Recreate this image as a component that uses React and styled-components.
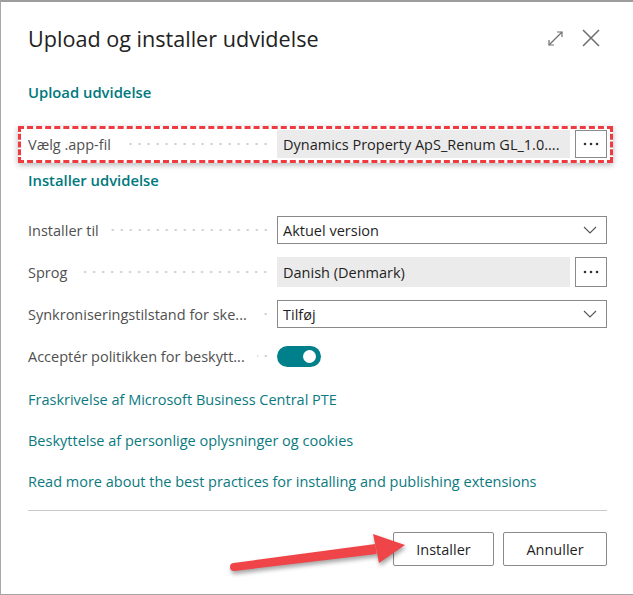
import React from 'react';
import styled, { createGlobalStyle } from 'styled-components';

const GlobalStyle = createGlobalStyle`
  html, body { margin: 0; padding: 0; background: #fff; }
  body { font-family: "Open Sans", "Noto Sans", Arial, sans-serif; }
`;

const teal = '#00787d';
const fieldBorder = '#8a8a8a';

const Dialog = styled.div`
  position: relative;
  width: 633px;
  height: 595px;
  box-sizing: border-box;
  background: #fff;
  border-top: 2px solid #9d9d9d;
  border-left: 1px solid #a8a8a8;
  border-bottom: 1px solid #a4a4a4;
  padding: 0 26px 0 27px;
  color: #212121;
  font-size: 14.5px;
`;

const Header = styled.div`
  display: flex;
  align-items: center;
  justify-content: space-between;
  height: 36px;
  margin-top: 18px;
`;

const Title = styled.h1`
  margin: 0;
  font-size: 21.6px;
  font-weight: 400;
  color: #222;
`;

const HeaderIcons = styled.div`
  display: flex;
  align-items: center;
  gap: 18px;
  margin-right: 7px;
  color: #707070;
`;

const SectionTitle = styled.h2`
  margin: ${p => p.$top}px 0 0;
  line-height: 20px;
  font-size: 14.8px;
  font-weight: 600;
  color: ${teal};
`;

const Highlight = styled.div`
  margin: 24px -6px 0 -10px;
  padding: 1px 3px 2px 7px;
  border: 3px dashed #ef3b40;
  box-shadow: 0 2px 6px rgba(0, 0, 0, 0.28);
`;

const Fields = styled.div`
  display: flex;
  flex-direction: column;
  gap: 12px;
  margin-top: 25px;
`;

const Row = styled.div`
  display: grid;
  grid-template-columns: 249px 1fr;
  align-items: center;
  height: ${p => p.$h || 30}px;
`;

const Label = styled.div`
  display: flex;
  align-items: center;
  padding-right: 7px;
  color: #505050;
  white-space: nowrap;
`;

const Leader = styled.span`
  flex: 1;
  height: 4px;
  margin-left: 12px;
  background-image: radial-gradient(circle, #c8c8c8 0.9px, transparent 1.3px);
  background-size: 9px 4px;
  background-repeat: repeat-x;
  background-position: right center;
`;

const Control = styled.div`
  display: flex;
  align-items: stretch;
  gap: 5px;
  height: 100%;
`;

const Select = styled.div`
  flex: 1;
  display: flex;
  align-items: center;
  justify-content: space-between;
  box-sizing: border-box;
  height: 28px;
  align-self: center;
  padding: 0 9px 0 5px;
  border: 1px solid ${fieldBorder};
  color: #1f1f1f;
`;

const ReadOnly = styled.div`
  flex: 1;
  display: flex;
  align-items: center;
  padding-left: 6px;
  background: #ebebeb;
  color: #1f1f1f;
  white-space: nowrap;
  overflow: hidden;
`;

const DotsButton = styled.button`
  width: 32px;
  box-sizing: border-box;
  padding: 0;
  display: flex;
  align-items: center;
  justify-content: center;
  background: #fff;
  border: 1px solid ${fieldBorder};
  color: #333;
`;

const Toggle = styled.div`
  position: relative;
  align-self: center;
  width: 44px;
  height: 21px;
  border-radius: 11px;
  background: #00808a;
  &::after {
    content: '';
    position: absolute;
    top: 4px;
    right: 5px;
    width: 13px;
    height: 13px;
    border-radius: 50%;
    background: #fff;
  }
`;

const Links = styled.div`
  display: flex;
  flex-direction: column;
  gap: 21px;
  margin-top: 19px;
`;

const Link = styled.a`
  line-height: 20px;
  color: #0b7a80;
  text-decoration: none;
`;

const Divider = styled.hr`
  margin: 18px 0 0;
  border: none;
  border-top: 1px solid #c8c8c8;
`;

const Footer = styled.div`
  display: flex;
  justify-content: flex-end;
  gap: 9px;
  margin-top: 21px;
`;

const Button = styled.button`
  width: ${p => p.$w}px;
  height: 34px;
  background: #fff;
  border: 1px solid ${fieldBorder};
  border-radius: 2px;
  font-family: inherit;
  font-size: 14.5px;
  color: #1f1f1f;
`;

const ArrowSvg = styled.svg`
  position: absolute;
  left: 220px;
  top: 520px;
  overflow: visible;
  filter: drop-shadow(1px 3px 2px rgba(0, 0, 0, 0.35));
`;

const ExpandIcon = () => (
  <svg width="17" height="17" viewBox="0 0 17 17" fill="none" stroke="currentColor" strokeWidth="1.2">
    <path d="M2 15 L15 2" />
    <path d="M10 2 H15 V7" />
    <path d="M2 10 V15 H7" />
  </svg>
);

const CloseIcon = () => (
  <svg width="18" height="18" viewBox="0 0 18 18" fill="none" stroke="currentColor" strokeWidth="1.6">
    <path d="M1 1 L17 17 M17 1 L1 17" />
  </svg>
);

const Chevron = () => (
  <svg width="14" height="8" viewBox="0 0 14 8" fill="none" stroke="#555" strokeWidth="1.1">
    <path d="M1 1 L7 7 L13 1" />
  </svg>
);

const Dots = () => (
  <svg width="16" height="4" viewBox="0 0 16 4" fill="currentColor">
    <circle cx="2" cy="2" r="1.3" />
    <circle cx="8" cy="2" r="1.3" />
    <circle cx="14" cy="2" r="1.3" />
  </svg>
);

const Field = ({ label, children, h }) => (
  <Row $h={h}>
    <Label>
      {label}
      <Leader />
    </Label>
    <Control>{children}</Control>
  </Row>
);

export default function App() {
  return (
    <>
      <GlobalStyle />
      <Dialog>
        <Header>
          <Title>Upload og installer udvidelse</Title>
          <HeaderIcons>
            <ExpandIcon />
            <CloseIcon />
          </HeaderIcons>
        </Header>

        <SectionTitle $top={26}>Upload udvidelse</SectionTitle>
        <Highlight>
          <Field label="Vælg .app-fil" h={28}>
            <ReadOnly>Dynamics Property ApS_Renum GL_1.0....</ReadOnly>
            <DotsButton><Dots /></DotsButton>
          </Field>
        </Highlight>

        <SectionTitle $top={7}>Installer udvidelse</SectionTitle>
        <Fields>
          <Field label="Installer til">
            <Select>Aktuel version<Chevron /></Select>
          </Field>
          <Field label="Sprog">
            <ReadOnly>Danish (Denmark)</ReadOnly>
            <DotsButton><Dots /></DotsButton>
          </Field>
          <Field label="Synkroniseringstilstand for ske...">
            <Select>Tilføj<Chevron /></Select>
          </Field>
          <Field label="Acceptér politikken for beskytt...">
            <Toggle />
          </Field>
        </Fields>

        <Links>
          <Link>Fraskrivelse af Microsoft Business Central PTE</Link>
          <Link>Beskyttelse af personlige oplysninger og cookies</Link>
          <Link>Read more about the best practices for installing and publishing extensions</Link>
        </Links>

        <Divider />
        <Footer>
          <Button $w={101}>Installer</Button>
          <Button $w={104}>Annuller</Button>
        </Footer>

        <ArrowSvg width="190" height="60" viewBox="0 0 190 60">
          <circle cx="13" cy="45" r="4" fill="#ef4448" />
          <polygon points="12.5,41 154.4,22 155.6,32 13.5,49" fill="#ef4448" />
          <polygon points="152,12 184,23 158,41" fill="#ef4448" />
        </ArrowSvg>
      </Dialog>
    </>
  );
}
